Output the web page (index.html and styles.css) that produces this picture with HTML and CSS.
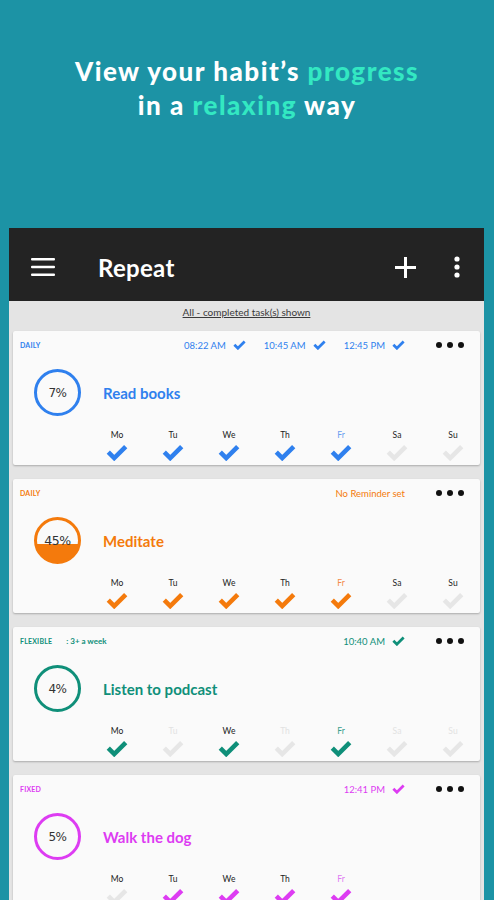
FILE: index.html
```html
<!DOCTYPE html>
<html lang="en">

<head>
    <meta charset="UTF-8">
    <meta name="viewport" content="width=device-width, initial-scale=1.0">
    <title>Repeat - Habit tracker</title>
    <link rel="stylesheet" href="styles.css">
</head>

<body>
    <svg width="0" height="0" class="defs">
        <symbol id="check" viewBox="0 0 24 18">
            <path d="M2.5 8.5 L9 15 L21.5 2.5" fill="none" stroke="currentColor" stroke-width="5" />
        </symbol>
    </svg>

    <section class="promo">
        <h1>View your habit’s <span class="accent">progress</span><br>in a <span class="accent">relaxing</span> way</h1>
    </section>

    <div class="phone">
        <header class="appbar">
            <span class="notch"></span>
            <svg class="menu" width="24" height="20" viewBox="0 0 24 20">
                <rect x="0" y="1" width="24" height="2.6" rx="1" fill="#fff" />
                <rect x="0" y="8.7" width="24" height="2.6" rx="1" fill="#fff" />
                <rect x="0" y="16.4" width="24" height="2.6" rx="1" fill="#fff" />
            </svg>
            <h2>Repeat</h2>
            <svg class="plus" width="21" height="21" viewBox="0 0 21 21">
                <rect x="9" y="0" width="3" height="21" fill="#fff" />
                <rect x="0" y="9" width="21" height="3" fill="#fff" />
            </svg>
            <svg class="overflow" width="6" height="22" viewBox="0 0 6 22">
                <circle cx="3" cy="3" r="2.6" fill="#fff" />
                <circle cx="3" cy="11" r="2.6" fill="#fff" />
                <circle cx="3" cy="19" r="2.6" fill="#fff" />
            </svg>
        </header>

        <p class="filter"><u>All - completed task(s) shown</u></p>

        <!-- Read books -->
        <div class="card blue">
            <div class="card-top">
                <span class="type">DAILY</span>
                <div class="times">
                    <span class="time">08:22 AM <svg class="tick"><use href="#check" /></svg></span>
                    <span class="time">10:45 AM <svg class="tick"><use href="#check" /></svg></span>
                    <span class="time">12:45 PM <svg class="tick"><use href="#check" /></svg></span>
                </div>
                <span class="dots"><i></i><i></i><i></i></span>
            </div>
            <div class="card-main">
                <div class="ring"><span>7%</span></div>
                <span class="habit">Read books</span>
            </div>
            <div class="days">
                <div class="day on"><span>Mo</span><svg class="check"><use href="#check" /></svg></div>
                <div class="day on"><span>Tu</span><svg class="check"><use href="#check" /></svg></div>
                <div class="day on"><span>We</span><svg class="check"><use href="#check" /></svg></div>
                <div class="day on"><span>Th</span><svg class="check"><use href="#check" /></svg></div>
                <div class="day on today"><span>Fr</span><svg class="check"><use href="#check" /></svg></div>
                <div class="day"><span>Sa</span><svg class="check"><use href="#check" /></svg></div>
                <div class="day"><span>Su</span><svg class="check"><use href="#check" /></svg></div>
            </div>
        </div>

        <!-- Meditate -->
        <div class="card orange">
            <div class="card-top">
                <span class="type">DAILY</span>
                <div class="times">
                    <span class="time">No Reminder set</span>
                </div>
                <span class="dots"><i></i><i></i><i></i></span>
            </div>
            <div class="card-main">
                <div class="ring filled"><span>45%</span></div>
                <span class="habit">Meditate</span>
            </div>
            <div class="days">
                <div class="day on"><span>Mo</span><svg class="check"><use href="#check" /></svg></div>
                <div class="day on"><span>Tu</span><svg class="check"><use href="#check" /></svg></div>
                <div class="day on"><span>We</span><svg class="check"><use href="#check" /></svg></div>
                <div class="day on"><span>Th</span><svg class="check"><use href="#check" /></svg></div>
                <div class="day on today"><span>Fr</span><svg class="check"><use href="#check" /></svg></div>
                <div class="day"><span>Sa</span><svg class="check"><use href="#check" /></svg></div>
                <div class="day"><span>Su</span><svg class="check"><use href="#check" /></svg></div>
            </div>
        </div>

        <!-- Listen to podcast -->
        <div class="card teal">
            <div class="card-top">
                <span class="type">FLEXIBLE</span>
                <span class="note">: 3+ a week</span>
                <div class="times">
                    <span class="time">10:40 AM <svg class="tick"><use href="#check" /></svg></span>
                </div>
                <span class="dots"><i></i><i></i><i></i></span>
            </div>
            <div class="card-main">
                <div class="ring"><span>4%</span></div>
                <span class="habit">Listen to podcast</span>
            </div>
            <div class="days">
                <div class="day on"><span>Mo</span><svg class="check"><use href="#check" /></svg></div>
                <div class="day faded"><span>Tu</span><svg class="check"><use href="#check" /></svg></div>
                <div class="day on"><span>We</span><svg class="check"><use href="#check" /></svg></div>
                <div class="day faded"><span>Th</span><svg class="check"><use href="#check" /></svg></div>
                <div class="day on today"><span>Fr</span><svg class="check"><use href="#check" /></svg></div>
                <div class="day faded"><span>Sa</span><svg class="check"><use href="#check" /></svg></div>
                <div class="day faded"><span>Su</span><svg class="check"><use href="#check" /></svg></div>
            </div>
        </div>

        <!-- Walk the dog -->
        <div class="card magenta">
            <div class="card-top">
                <span class="type">FIXED</span>
                <div class="times">
                    <span class="time">12:41 PM <svg class="tick"><use href="#check" /></svg></span>
                </div>
                <span class="dots"><i></i><i></i><i></i></span>
            </div>
            <div class="card-main">
                <div class="ring"><span>5%</span></div>
                <span class="habit">Walk the dog</span>
            </div>
            <div class="days">
                <div class="day"><span>Mo</span><svg class="check"><use href="#check" /></svg></div>
                <div class="day on"><span>Tu</span><svg class="check"><use href="#check" /></svg></div>
                <div class="day on"><span>We</span><svg class="check"><use href="#check" /></svg></div>
                <div class="day on"><span>Th</span><svg class="check"><use href="#check" /></svg></div>
                <div class="day on today"><span>Fr</span><svg class="check"><use href="#check" /></svg></div>
                <div class="day"></div>
                <div class="day"></div>
            </div>
        </div>
    </div>
</body>

</html>
```

FILE: styles.css
```css
body {
    font-family: Lato, "Open Sans", sans-serif;
    background-color: #1c93a5;
    margin: 0;
    padding: 0;
    height: 900px;
    overflow: hidden;
}

.defs {
    position: absolute;
}

.promo {
    height: 228px;
    box-sizing: border-box;
    padding-top: 54px;
}

.promo h1 {
    margin: 0;
    color: #fff;
    font-size: 26px;
    line-height: 34px;
    font-weight: 900;
    text-align: center;
    letter-spacing: 1.5px;
}

.accent {
    color: #33e8c2;
}

.phone {
    margin: 0 10px 0 9px;
    background-color: #e4e4e4;
    height: 672px;
    overflow: hidden;
}

.appbar {
    position: relative;
    height: 73px;
    box-sizing: border-box;
    padding-top: 5px;
    background-color: #232323;
    display: flex;
    align-items: center;
}

.notch {
    position: absolute;
    top: -2px;
    left: 356px;
    width: 32px;
    height: 2px;
    background-color: #2a1414;
}

.menu {
    margin-left: 22px;
}

.appbar h2 {
    margin: 0 0 0 43px;
    color: #fff;
    font-size: 24px;
    font-weight: 700;
    letter-spacing: 0.3px;
}

.plus {
    margin-left: auto;
}

.overflow {
    margin: 0 24px 0 38px;
}

.filter {
    margin: 0;
    height: 30px;
    line-height: 22px;
    text-align: center;
    font-size: 10px;
    color: #3a3a3a;
}

.card {
    margin: 0 4px 14px 4px;
    height: 134px;
    box-sizing: border-box;
    padding-top: 8px;
    background-color: #fafafa;
    border-radius: 2px;
    box-shadow: 0 1px 2px rgba(0, 0, 0, 0.25);
    color: var(--c);
}

.blue { --c: #2f80ee; --soft: #6b9ff0; }
.orange { --c: #f47a0c; --soft: #f38a4c; }
.teal { --c: #0f8f79; --soft: #3aa08e; }
.magenta { --c: #dd3cf2; --soft: #e07cf2; }

.card-top {
    display: flex;
    align-items: center;
    height: 12px;
    padding: 0 16px 0 7px;
}

.type {
    font-size: 7px;
    font-weight: 700;
    letter-spacing: 0.2px;
}

.note {
    margin-left: 14px;
    font-size: 8px;
    font-weight: 700;
}

.times {
    margin-left: auto;
    display: flex;
    gap: 18px;
}

.time {
    display: flex;
    align-items: center;
    gap: 7px;
    font-size: 9.5px;
}

.tick {
    width: 13px;
    height: 10px;
}

.dots {
    display: flex;
    gap: 5px;
    margin-left: 31px;
}

.dots i {
    width: 6px;
    height: 6px;
    border-radius: 50%;
    background-color: #111;
}

.card-main {
    display: flex;
    align-items: center;
    margin-top: 18px;
    padding-left: 21px;
}

.ring {
    width: 47px;
    height: 47px;
    box-sizing: border-box;
    border: 3px solid var(--c);
    border-radius: 50%;
    display: flex;
    align-items: center;
    justify-content: center;
    font-family: "DejaVu Sans", sans-serif;
    font-size: 12px;
    color: #333;
    letter-spacing: -0.5px;
}

.ring.filled {
    background: linear-gradient(to top, var(--c) 42%, transparent 42%);
    font-size: 12.5px;
}

.habit {
    margin-left: 22px;
    font-size: 15px;
    font-weight: 700;
}

.days {
    display: grid;
    grid-template-columns: repeat(7, 56px);
    margin: 13px 0 0 76px;
}

.day {
    display: flex;
    flex-direction: column;
    align-items: center;
    color: #e6e6e6;
}

.day span {
    height: 12px;
    line-height: 12px;
    font-size: 8.5px;
    color: #222;
}

.day.on {
    color: var(--c);
}

.day.today span {
    color: var(--soft);
}

.day.faded span {
    color: #e2e2e2;
}

.check {
    margin-top: 3px;
    width: 22px;
    height: 17px;
}
```
